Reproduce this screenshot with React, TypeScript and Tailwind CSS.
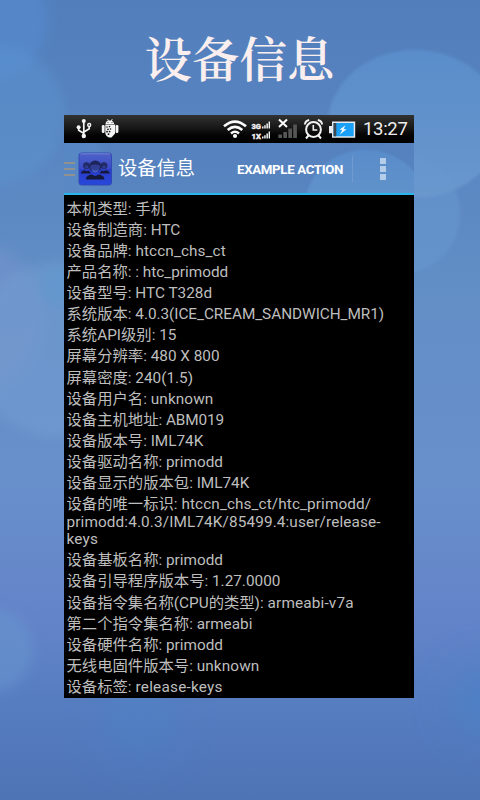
import React from "react";

type Line = { label: string; value: string; spacing?: string };

const TIGHT = "tracking-[-0.035px]";
const LOOSE = "tracking-[0.22px]";

const ROWS: Line[][] = [
  [{ label: "本机类型:", value: " 手机" }],
  [{ label: "设备制造商:", value: " HTC" }],
  [{ label: "设备品牌:", value: " htccn_chs_ct", spacing: "tracking-[0.1px]" }],
  [{ label: "产品名称:", value: " : htc_primodd" }],
  [{ label: "设备型号:", value: " HTC T328d" }],
  [{ label: "系统版本:", value: " 4.0.3(ICE_CREAM_SANDWICH_MR1)", spacing: TIGHT }],
  [{ label: "系统API级别:", value: " 15" }],
  [{ label: "屏幕分辨率:", value: " 480 X 800" }],
  [{ label: "屏幕密度:", value: " 240(1.5)" }],
  [{ label: "设备用户名:", value: " unknown", spacing: "tracking-[0.1px]" }],
  [{ label: "设备主机地址:", value: " ABM019", spacing: "tracking-[-0.1px]" }],
  [{ label: "设备版本号:", value: " IML74K" }],
  [{ label: "设备驱动名称:", value: " primodd" }],
  [{ label: "设备显示的版本包:", value: " IML74K" }],
  [
    { label: "设备的唯一标识:", value: " htccn_chs_ct/htc_primodd/", spacing: "tracking-[0.1px]" },
    { label: "", value: "primodd:4.0.3/IML74K/85499.4:user/release-", spacing: "tracking-[0.12px]" },
    { label: "", value: "keys", spacing: LOOSE },
  ],
  [{ label: "设备基板名称:", value: " primodd" }],
  [{ label: "设备引导程序版本号:", value: " 1.27.0000" }],
  [{ label: "设备指令集名称(CPU的类型):", value: " armeabi-v7a", spacing: "tracking-[0.15px]" }],
  [{ label: "第二个指令集名称:", value: " armeabi" }],
  [{ label: "设备硬件名称:", value: " primodd" }],
  [{ label: "无线电固件版本号:", value: " unknown", spacing: "tracking-[0.1px]" }],
  [{ label: "设备标签:", value: " release-keys", spacing: LOOSE }],
];

function Wallpaper() {
  return (
    <svg className="absolute inset-0 h-full w-full" viewBox="0 0 480 800" preserveAspectRatio="none" aria-hidden="true">
      <defs>
        <linearGradient id="sky" x1="0" y1="0" x2="0" y2="1">
          <stop offset="0" stopColor="#527fbc" />
          <stop offset="0.12" stopColor="#5682bf" />
          <stop offset="0.35" stopColor="#628ec6" />
          <stop offset="0.6" stopColor="#6890cb" />
          <stop offset="0.77" stopColor="#6484c9" />
          <stop offset="0.88" stopColor="#567dc0" />
          <stop offset="1" stopColor="#4f74b6" />
        </linearGradient>
        <linearGradient id="orb" x1="0" y1="0" x2="0" y2="1">
          <stop offset="0" stopColor="#5b90cd" />
          <stop offset="1" stopColor="#6c99cf" />
        </linearGradient>
        <filter id="soft" x="-30%" y="-30%" width="160%" height="160%"><feGaussianBlur stdDeviation="6" /></filter>
        <filter id="edge"><feGaussianBlur stdDeviation="1.5" /></filter>
        <filter id="wide" x="-80%" y="-80%" width="260%" height="260%"><feGaussianBlur stdDeviation="22" /></filter>
      </defs>
      <rect width="480" height="800" fill="url(#sky)" />
      <circle cx="-15" cy="20" r="62" fill="#568bd0" opacity="0.6" filter="url(#soft)" />
      <circle cx="-5" cy="115" r="70" fill="#5c95d1" opacity="0.45" filter="url(#soft)" />
      <circle cx="-35" cy="320" r="80" fill="#7894cd" opacity="0.5" filter="url(#soft)" />
      <circle cx="60" cy="350" r="88" fill="#74a0d2" opacity="0.45" filter="url(#soft)" />
      <circle cx="62" cy="286" r="20" fill="#5a98d0" opacity="0.4" filter="url(#soft)" />
      <circle cx="400" cy="214" r="60" fill="#6695cd" opacity="0.65" filter="url(#edge)" />
      <ellipse cx="415" cy="124" rx="87" ry="74" fill="url(#orb)" opacity="0.85" filter="url(#edge)" />
      <circle cx="-8" cy="650" r="42" fill="#6797d0" opacity="0.5" filter="url(#soft)" />
      <circle cx="140" cy="725" r="36" fill="#4784cb" opacity="0.4" filter="url(#wide)" />
      <circle cx="490" cy="700" r="34" fill="#4783cb" opacity="0.65" filter="url(#wide)" />
    </svg>
  );
}

function StatusBar() {
  return (
    <div className="flex h-[28px] shrink-0 items-start bg-linear-to-b from-[#333333] via-[#151515] to-black">
      <svg className="ml-3 h-[27px] w-[45px]" viewBox="76 115 45 27" fill="#f4f4f4" stroke="#f4f4f4">
        <path d="M83.800 121v14M84 133.500l-5.300-3.200v-2.500M84 132l5.200-3.200v-3" fill="none" strokeWidth="1.700" />
        <g stroke="none">
          <circle cx="83.800" cy="121" r="2" />
          <circle cx="83.800" cy="136" r="2.200" />
          <circle cx="78.600" cy="127.300" r="2" />
          <circle cx="89.200" cy="125" r="2.200" />
          <path d="M105.500 124c.3-2.200 1.600-3 2.500-3.200l-.9-1.500.7-.4 1 1.600h2.200l1-1.600.7.4-.9 1.500c1.200.5 2 1.600 2.300 3.200z" />
          <path d="M105.300 124.600h9.800v8.800l-3.600 4.200h-2.500c-2-.5-3.700-2.500-3.700-4.500z" />
          <rect x="101.800" y="125" width="2.800" height="8" rx="1.200" />
          <rect x="115.600" y="125" width="2.800" height="8" rx="1.200" />
        </g>
        <circle cx="89.200" cy="125" r=".8" fill="#181818" stroke="none" />
        <g fill="#181818" stroke="none">
          <circle cx="108" cy="122.600" r=".5" /><circle cx="112" cy="122.600" r=".5" />
          <circle cx="107" cy="127" r=".8" /><circle cx="109.500" cy="126.600" r=".8" />
          <circle cx="108" cy="129.300" r=".9" /><circle cx="110.500" cy="129" r=".8" />
          <circle cx="107" cy="131.700" r=".9" /><circle cx="109.600" cy="131.600" r=".9" />
          <circle cx="108.500" cy="134.200" r=".9" />
        </g>
      </svg>
      <svg className="ml-auto h-[27px] w-[136px]" viewBox="221 115 136 27">
        <g fill="none" stroke="#fafafa" strokeWidth="2.600">
          <path d="M224 126.300q11-9.500 22 0" />
          <path d="M227.700 130q7.300-6.200 14.600 0" />
          <path d="M231 133.400q4-3.300 8 0" />
        </g>
        <circle cx="235" cy="136" r="2.100" fill="#fafafa" />
        <g fill="#f2f2f2" stroke="#f2f2f2" strokeWidth=".3" fontFamily="Roboto, sans-serif" fontWeight="900" fontSize="7">
          <text x="251.500" y="128.500" textLength="9.500" lengthAdjust="spacingAndGlyphs">3G</text>
          <text x="251.500" y="138.500" textLength="9.500" lengthAdjust="spacingAndGlyphs">1X</text>
          <path stroke="none" d="M262 126.500h1.500v2H262zM264.200 125.200h1.500v3.300h-1.500zM266.400 123.500h1.500v5h-1.500zM268.600 121.500h1.400v7h-1.400zM262 136.500h1.500v2H262zM264.200 135.200h1.500v3.300h-1.500zM266.400 133.500h1.500v5h-1.500zM268.600 131.500h1.400v7h-1.400z" />
        </g>
        <path d="M278.300 134.500h3.700v3.500h-3.700zM283.300 132h3.700v6h-3.700zM288.300 128.500h3.700v9.500h-3.700zM293.200 124.500h3.700V138h-3.700z" fill="#555" />
        <path d="M279 119.500l8 7.500M287 119.500l-8 7.500" stroke="#fff" strokeWidth="2" />
        <g fill="none" stroke="#f2f2f2">
          <circle cx="313.500" cy="129.500" r="7.400" strokeWidth="2" />
          <path d="M313.300 125v5h4" strokeWidth="1.600" />
          <path d="M304.900 124.500q.3-3.800 4.300-4.600M322.100 124.500q-.3-3.800-4.300-4.600M308.500 135.500l-2.500 3M318.500 135.500l2.500 3" strokeWidth="2" />
        </g>
        <path d="M329 126h3v-4.500h23.200v16.300H332v-4.500h-3z" fill="#e7ebed" />
        <path d="M333.500 123h20.200v13.300h-20.200z" fill="#1aa0f7" />
        <path d="M333.500 123h2.800v13.300h-2.800z" fill="#3d474d" />
        <path d="M345.500 125.200l-6 4.600h3l-2.700 4.600 6.700-5.200h-3.100z" fill="#fff" />
      </svg>
      <span className="ml-[6px] mr-[7px] h-[28px] w-[44px] whitespace-nowrap pt-px text-[18.500px] leading-[27px] tracking-[-0.3px] text-[#ededed]">13:27</span>
    </div>
  );
}

function GroupIcon() {
  return (
    <svg className="h-[34px] w-[34px] shrink-0" viewBox="0 0 34 34">
      <defs>
        <linearGradient id="tile" x1="0" y1="0" x2="0" y2="1">
          <stop offset="0" stopColor="#4f62c6" /><stop offset=".48" stopColor="#3a4cc8" />
          <stop offset=".52" stopColor="#2b3cc8" /><stop offset="1" stopColor="#2748dc" />
        </linearGradient>
      </defs>
      <rect x="1" y="1" width="32.500" height="32" rx="2.500" fill="url(#tile)" stroke="#3049b4" />
      <path d="M2.500 1.800h29.500" stroke="#7f90d8" strokeWidth=".8" />
      <g fill="#222a66">
        <circle cx="8.500" cy="13.700" r="3.400" /><circle cx="26" cy="13.700" r="3.400" />
      </g>
      <g fill="#14193c">
        <path d="M2.800 21.500c.3-2.300 2-2.900 4-3.300l2 1 2-.8 2.300 3.100zM31.700 21.500c-.3-2.300-2-2.900-4-3.300l-2 1-2-.8-2.300 3.100z" />
        <path d="M8 27.500c0-3.500 2.800-4.300 5.500-5l3.700 1.500 3.700-1.500c2.700.7 5.500 1.500 5.500 5z" />
      </g>
      <circle cx="17.200" cy="14.500" r="6" fill="#1d245c" />
      <path d="M12.500 13.500q4.700-2 9.400 0c.3 3.800-2 7-4.700 7s-5-3.200-4.700-7z" fill="#303f94" />
      <path d="M13.500 17.300q3.700 2.800 7.400 0c-.8 2.300-2.200 3.200-3.700 3.200s-2.900-.9-3.700-3.200z" fill="#4560cf" />
      <circle cx="8.500" cy="15" r="1.700" fill="#2e3c94" /><circle cx="26" cy="15" r="1.700" fill="#2e3c94" />
    </svg>
  );
}

function ActionBar() {
  return (
    <div className="relative flex h-[52px] shrink-0 items-center overflow-hidden border-b-2 border-[#29b6e8] bg-linear-to-b from-[#5581bf] to-[#5884bf]">
      <svg className="absolute inset-0 h-full w-full" viewBox="0 0 350 51" preserveAspectRatio="none" aria-hidden="true">
        <defs>
          <linearGradient id="barOrb" x1="0" y1="0" x2="0" y2="1"><stop offset="0" stopColor="#5a8fcd" /><stop offset=".6" stopColor="#6798cd" /></linearGradient>
          <filter id="barSoft"><feGaussianBlur stdDeviation="1" /></filter>
          <filter id="barWide" x="-30%" y="-30%" width="160%" height="160%"><feGaussianBlur stdDeviation="5" /></filter>
        </defs>
        <ellipse cx="0" cy="20" rx="40" ry="45" fill="#5c91cd" opacity=".4" filter="url(#barWide)" />
        <ellipse cx="302" cy="65" rx="61" ry="58" fill="url(#barOrb)" opacity=".85" filter="url(#barSoft)" />
      </svg>
      <div className="relative flex h-full w-full items-center pt-[2px]">
        <div className="flex w-[11px] flex-col gap-[4px]">
          <div className="h-[2px] bg-[#91918f]" />
          <div className="h-[2px] bg-[#91918f]" />
          <div className="h-[2px] bg-[#91918f]" />
        </div>
        <div className="ml-[3px] flex"><GroupIcon /></div>
        <span className="ml-[6px] w-[78px] whitespace-nowrap pt-px text-[19.300px] text-white">设备信息</span>
        <span className="ml-[41px] w-[107px] whitespace-nowrap pt-px text-[13.300px] font-bold tracking-[-0.35px] text-white">EXAMPLE ACTION</span>
        <div className="ml-[8px] h-[26px] w-px bg-[#719bd0]" />
        <div className="ml-[27px] flex w-[6px] flex-col gap-[2px]">
          <div className="h-[6px] bg-[#b6cde9]" />
          <div className="h-[6px] bg-[#b6cde9]" />
          <div className="h-[6px] bg-[#b6cde9]" />
        </div>
      </div>
    </div>
  );
}

export default function App() {
  return (
    <div className="relative flex h-[800px] w-[480px] flex-col overflow-hidden bg-[#5b84c2] font-[Roboto,'Noto_Sans_CJK_SC',sans-serif]">
      <Wallpaper />
      <h1 className="relative h-[115px] pl-[144.500px] pt-[22px] font-['Noto_Serif_CJK_SC','Source_Han_Serif_SC','Noto_Sans_CJK_SC',serif] text-[47.500px] font-semibold leading-[70px] text-[#faeeee]">设备信息</h1>
      <div className="relative ml-[64px] flex h-[583px] w-[350px] flex-col overflow-hidden bg-black">
        <StatusBar />
        <ActionBar />
        <ul className="flex shrink-0 flex-col pl-[2.500px] pt-[4px] text-[15.330px] leading-[17.600px] text-[#bebebe]">
          {ROWS.map((lines) => (
            <li key={lines[0].label} className="py-[1.750px]">
              {lines.map((line) => (
                <div key={line.value} className="h-[17.600px] whitespace-pre">
                  {line.label}
                  <span className={line.spacing ?? "tracking-normal"}>{line.value}</span>
                </div>
              ))}
            </li>
          ))}
        </ul>
      </div>
    </div>
  );
}
